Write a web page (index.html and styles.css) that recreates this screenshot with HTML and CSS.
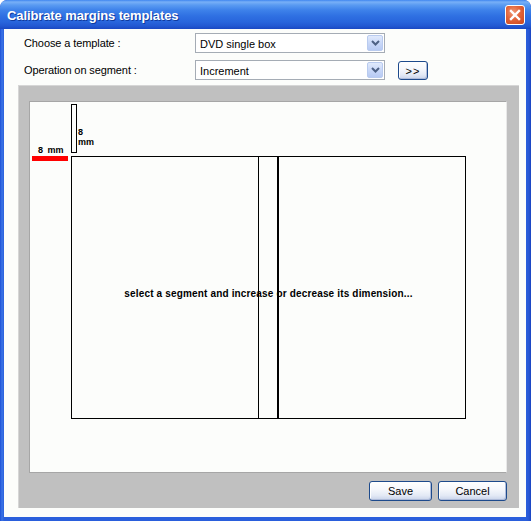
FILE: index.html
```html
<!DOCTYPE html>
<html>
<head>
<meta charset="utf-8">
<link rel="stylesheet" href="styles.css">
</head>
<body>
<div class="window">
  <div class="titlebar">
    <span class="title">Calibrate margins templates</span>
    <span class="close">
      <svg width="12" height="12" viewBox="0 0 12 12"><path d="M2 2 L10 10 M10 2 L2 10" stroke="#fff" stroke-width="2.4" stroke-linecap="square"/></svg>
    </span>
  </div>
  <div class="client">
    <div class="form-row">
      <span class="label">Choose a template :</span>
      <div class="combo"><span class="combo-text">DVD single box</span><span class="drop"><svg width="9" height="6" viewBox="0 0 9 6"><path d="M1 1 L4.5 4.5 L8 1" fill="none" stroke="#4d6185" stroke-width="2"/></svg></span></div>
    </div>
    <div class="form-row row2">
      <span class="label">Operation on segment :</span>
      <div class="combo"><span class="combo-text">Increment</span><span class="drop"><svg width="9" height="6" viewBox="0 0 9 6"><path d="M1 1 L4.5 4.5 L8 1" fill="none" stroke="#4d6185" stroke-width="2"/></svg></span></div>
      <span class="btn btn-next">&gt;&gt;</span>
    </div>
    <div class="panel">
      <div class="canvas">
        <div class="vbar"></div>
        <div class="vlabel">8<br>mm</div>
        <div class="hlabel">8 mm</div>
        <div class="redbar"></div>
        <div class="sheet">
          <div class="seg seg1"></div>
          <div class="seg seg2"></div>
          <div class="hint">select a segment and increase or decrease its dimension...</div>
        </div>
      </div>
      <div class="actions">
        <span class="btn btn-save">Save</span>
        <span class="btn btn-cancel">Cancel</span>
      </div>
    </div>
  </div>
</div>
</body>
</html>
```
FILE: styles.css
```css
html, body {
  margin: 0;
  padding: 0;
  background: #ffffff;
}
.window {
  width: 531px;
  height: 521px;
  box-sizing: border-box;
  background: linear-gradient(to right, #1d4fd6 0, #3b74e6 2px, #2a5fdc 4px, #2a5fdc 526px, #2756d4 529px, #1a44c0 531px);
  border-radius: 7px 7px 0 0;
  display: flex;
  flex-direction: column;
  font-family: "Liberation Sans", Arial, sans-serif;
  font-size: 11px;
  color: #000;
  overflow: hidden;
}
.titlebar {
  height: 29px;
  flex: none;
  display: flex;
  align-items: center;
  padding: 0 6px 0 7px;
  background: linear-gradient(to bottom, #3f86f0 0, #78b0f7 2px, #5a9bf2 5px, #3e82ea 10px, #2f70e2 16px, #2865dc 22px, #2258d2 26px, #1a48c2 29px);
  border-radius: 7px 7px 0 0;
}
.title {
  color: #fff;
  font-weight: bold;
  font-size: 13px;
  letter-spacing: -0.1px;
  text-shadow: 1px 1px 0 #0f3a9e;
  padding-top: 1px;
}
.close {
  margin-left: auto;
  width: 20px;
  height: 20px;
  box-sizing: border-box;
  border: 1px solid #ffffff;
  border-radius: 3px;
  background: radial-gradient(circle at 40% 35%, #f09a78 0, #e2643a 45%, #c9451c 100%);
  display: flex;
  align-items: center;
  justify-content: center;
  margin-top: 1px;
}
.client {
  flex: 1;
  margin: 0 5px 4px 4px;
  background: #fcfdfb;
  display: flex;
  flex-direction: column;
}
.form-row {
  display: flex;
  align-items: center;
  height: 20px;
  margin-top: 4px;
}
.form-row.row2 {
  margin-top: 7px;
}
.label {
  width: 171px;
  padding-left: 20px;
  flex: none;
  letter-spacing: -0.1px;
}
.combo {
  width: 190px;
  height: 20px;
  box-sizing: border-box;
  border: 1px solid #a5acb5;
  background: #fff;
  display: flex;
  align-items: center;
  padding: 0 1px 0 4px;
}
.combo-text {
  flex: 1;
  padding-top: 1px;
}
.drop {
  width: 16px;
  height: 16px;
  box-sizing: border-box;
  border: 1px solid #b9cbef;
  border-radius: 2px;
  background: linear-gradient(to bottom, #e1eafc 0, #c9d8f8 50%, #b7caf3 100%);
  display: flex;
  align-items: center;
  justify-content: center;
}
.btn {
  display: flex;
  align-items: center;
  justify-content: center;
  box-sizing: border-box;
  height: 20px;
  border: 1px solid #1d4a8c;
  border-radius: 3px;
  background: linear-gradient(to bottom, #ffffff 0, #f6f8fc 40%, #e3e9f5 75%, #c8d3ea 100%);
  box-shadow: inset -1px -1px 0 #aebbd9, inset 1px 1px 0 #ffffff;
  font-size: 11px;
}
.btn-next {
  width: 30px;
  height: 19px;
  margin-left: 13px;
  margin-top: 1px;
  letter-spacing: 1px;
}
.panel {
  margin: 5px 0 0 14px;
  width: 501px;
  height: 423px;
  box-sizing: border-box;
  background: #c0c0c0;
  border-top: 1px solid #d6d6d6;
  border-left: 1px solid #d6d6d6;
  padding: 15px 12px 0 10px;
  display: flex;
  flex-direction: column;
}
.canvas {
  position: relative;
  width: 478px;
  height: 372px;
  box-sizing: border-box;
  background: #fcfdfb;
  border: 1px solid #a6a6a6;
  border-right-color: #e8e8e8;
  border-bottom-color: #a6a6a6;
  flex: none;
}
.vbar {
  position: absolute;
  left: 41px;
  top: 2px;
  width: 6px;
  height: 49px;
  box-sizing: border-box;
  border: 1px solid #000;
}
.vlabel {
  position: absolute;
  left: 48px;
  top: 25px;
  font-size: 9px;
  line-height: 10px;
  font-weight: bold;
}
.hlabel {
  position: absolute;
  left: 8px;
  top: 43px;
  font-size: 9px;
  line-height: 10px;
  font-weight: bold;
  word-spacing: 2px;
}
.redbar {
  position: absolute;
  left: 2px;
  top: 54px;
  width: 36px;
  height: 5px;
  background: #ff0000;
}
.sheet {
  position: absolute;
  left: 41px;
  top: 54px;
  width: 395px;
  height: 263px;
  box-sizing: border-box;
  border: 1px solid #000;
}
.seg {
  position: absolute;
  top: 0;
  bottom: 0;
  background: #000;
}
.seg1 {
  left: 186px;
  width: 1px;
}
.seg2 {
  left: 205px;
  width: 2px;
}
.hint {
  position: absolute;
  left: 0;
  right: 0;
  top: 130px;
  text-align: center;
  font-size: 10px;
  line-height: 13px;
  font-weight: bold;
  letter-spacing: 0.16px;
}
.actions {
  display: flex;
  justify-content: flex-end;
  gap: 6px;
  margin-top: 8px;
}
.btn-save {
  width: 63px;
}
.btn-cancel {
  width: 69px;
}
```
